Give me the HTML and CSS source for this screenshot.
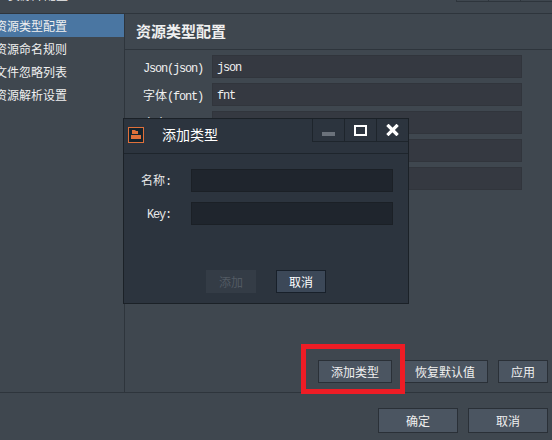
FILE: index.html
```html
<!DOCTYPE html>
<html lang="zh-CN">
<head>
  <meta charset="UTF-8">
  <title>资源配置</title>
  <link rel="stylesheet" href="styles.css">
</head>
<body>
  <div class="window">
    <div class="titlebar">
      <span class="title">资源库配置</span>
      <div class="win-btns"><i></i><i></i><i></i></div>
    </div>
    <div class="main">
      <ul class="side">
        <li class="active">资源类型配置</li>
        <li>资源命名规则</li>
        <li>文件忽略列表</li>
        <li>资源解析设置</li>
      </ul>
      <div class="content">
        <h2>资源类型配置</h2>
        <div class="rows">
          <div class="row"><label><span class="lat">Json(json)</span></label><div class="field lat">json</div></div>
          <div class="row"><label>字体<span class="lat">(font)</span></label><div class="field lat">fnt</div></div>
          <div class="row"><label>文本<span class="lat">(text)</span></label><div class="field lat">txt</div></div>
          <div class="row"><label></label><div class="field"></div></div>
          <div class="row"><label></label><div class="field"></div></div>
        </div>
        <div class="actions">
          <button class="add-type">添加类型</button>
          <button class="reset">恢复默认值</button>
          <button class="apply">应用</button>
        </div>
      </div>
    </div>
    <div class="footer">
      <button>确定</button>
      <button>取消</button>
    </div>
  </div>

  <div class="highlight"></div>

  <div class="dialog">
    <div class="dlg-head">
      <svg class="dlg-icon" width="16" height="16" viewBox="0 0 16 16">
        <rect x="0.5" y="0.5" width="15" height="15" fill="#14242e" stroke="#e0703a"/>
        <path d="M4 3h3l1 1h2v3H4z" fill="#e0703a"/>
        <rect x="3" y="8" width="10" height="4" fill="#e0703a"/>
      </svg>
      <span class="dlg-title">添加类型</span>
      <div class="dlg-btns">
        <div class="dlg-btn">
          <svg width="13" height="12" viewBox="0 0 13 12"><rect x="0" y="8" width="13" height="4" fill="#6b727b"/></svg>
        </div>
        <div class="dlg-btn">
          <svg width="13" height="12" viewBox="0 0 13 12"><rect x="1" y="2" width="11" height="9" fill="none" stroke="#fff" stroke-width="2"/></svg>
        </div>
        <div class="dlg-btn">
          <svg width="13" height="12" viewBox="0 0 13 12"><path d="M2.5 2l8 8M10.5 2l-8 8" stroke="#fff" stroke-width="3.2" stroke-linecap="square"/></svg>
        </div>
      </div>
    </div>
    <div class="dlg-body">
      <div class="dlg-row"><label>名称<span class="lat">:</span></label><div class="dlg-input"></div></div>
      <div class="dlg-row"><label><span class="lat">Key:</span></label><div class="dlg-input"></div></div>
    </div>
    <div class="dlg-foot">
      <button class="off">添加</button>
      <button class="on">取消</button>
    </div>
  </div>
</body>
</html>
```

FILE: styles.css
```css
* { box-sizing: border-box; }
html, body { margin: 0; height: 100%; overflow: hidden; }
body { font-family: "Noto Sans CJK SC", sans-serif; font-size: 12px; color: #f0f0f0; background: #3f474f; }
.lat { font-family: "Liberation Mono", monospace; font-size: 12px; letter-spacing: -1.2px; }

.window { width: 552px; height: 440px; display: flex; flex-direction: column; }
.titlebar { height: 14px; border-bottom: 1px solid #2e353c; display: flex; justify-content: flex-end; position: relative; overflow: hidden; }
.title { position: absolute; left: 8px; top: -14px; font-size: 12px; line-height: 18px; }
.win-btns { display: flex; margin-top: -20px; height: 22px; }
.win-btns i { width: 32px; border: 1px solid #2e353c; border-right-width: 0; }

.main { flex: none; height: 379px; display: flex; border-bottom: 1px solid #2e353c; }
.side { list-style: none; margin: 0; padding: 0; width: 125px; border-right: 1px solid #2e353c; }
.side li { height: 23px; line-height: 23px; text-indent: -5px; white-space: nowrap; overflow: hidden; }
.side li.active { background: #4a76a2; }

.content { flex: 1; display: flex; flex-direction: column; }
.content h2 { margin: 0; height: 36px; line-height: 33px; padding-left: 11px; font-size: 15px; font-weight: 700; border-bottom: 1px solid #2e353c; }
.rows { padding: 5px 30px 0 18px; display: flex; flex-direction: column; gap: 5px; }
.row { display: flex; height: 23px; align-items: center; }
.row label { width: 69px; height: 23px; line-height: 23px; white-space: nowrap; }
.field { flex: 1; height: 23px; line-height: 25px; padding-left: 4px; background: #353941; border: 1px solid #31353c; }

.actions { margin-top: auto; padding: 0 4px 9px 0; display: flex; justify-content: flex-end; gap: 10px; }
button { font: inherit; color: #f0f0f0; background: #4b5561; border: 1px solid #2a3037; height: 23px; padding: 0; }
.add-type { width: 74px; }
.reset { width: 86px; }
.apply { width: 50px; }

.footer { flex: 1; display: flex; justify-content: flex-end; gap: 10px; padding: 15px 4px 0 0; }
.footer button { width: 80px; height: 25px; }

.highlight { position: absolute; left: 301px; top: 344px; width: 104px; height: 50px; border: 5px solid #ee1c25; }

.dialog { position: absolute; left: 123px; top: 118px; width: 286px; height: 186px; background: #2c343e; border: 1px solid #1b2127; display: flex; flex-direction: column; }
.dlg-head { height: 35px; flex: none; display: flex; align-items: center; border-bottom: 1px solid #1e252c; position: relative; }
.dlg-icon { margin: -2px 0 0 4px; }
.dlg-title { margin: -4px 0 0 18px; font-size: 14px; color: #fff; }
.dlg-btns { position: absolute; right: 0; top: 0; display: flex; }
.dlg-btn { width: 32px; height: 23px; border-left: 1px solid #1e252c; border-bottom: 1px solid #1e252c; display: flex; align-items: center; justify-content: center; }
.dlg-body { padding: 15px 15px 0 0; display: flex; flex-direction: column; gap: 10px; }
.dlg-row { display: flex; align-items: center; }
.dlg-row label { width: 47px; height: 23px; line-height: 22px; text-align: right; color: #e8e8e8; }
.dlg-input { margin-left: auto; width: 202px; height: 23px; background: #1f252d; border: 1px solid #1b2026; }
.dlg-foot { margin-top: auto; padding: 0 0 10px 82px; display: flex; gap: 20px; }
.dlg-foot button { width: 50px; height: 23px; }
.off { background: #343c46; border-color: #343c46; color: #525a63; }
.on { background: #3c4858; border-color: #18202a; color: #fff; }
```
